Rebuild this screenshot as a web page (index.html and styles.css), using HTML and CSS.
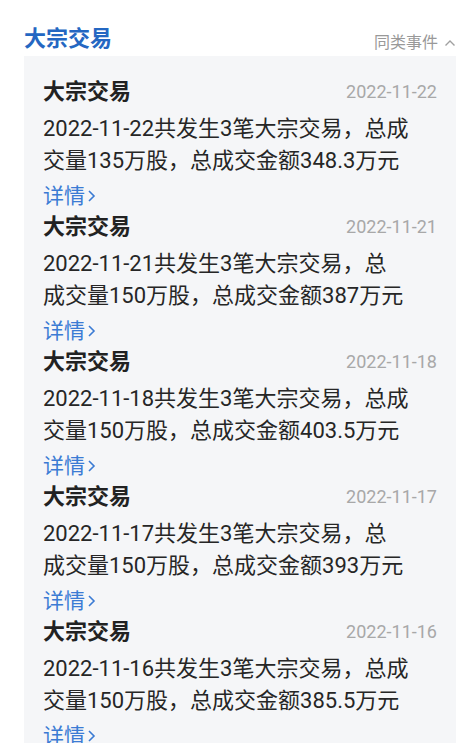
FILE: index.html
```html
<!DOCTYPE html>
<html lang="zh-CN">
<head>
<meta charset="UTF-8">
<meta name="viewport" content="width=device-width, initial-scale=1.0">
<title>大宗交易</title>
<link rel="stylesheet" href="styles.css">
</head>
<body>
<div class="wrapper">
    <div class="head">
        <div class="head-title">大宗交易</div>
        <div class="head-more">同类事件
            <svg class="caret" width="12" height="8" viewBox="0 0 12 8"><path d="M1.5 6.5 L6 2 L10.5 6.5" fill="none" stroke="#a0a0a0" stroke-width="1.4"/></svg>
        </div>
    </div>
    <div class="list">
        <div class="item">
            <div class="item-top"><span class="item-title">大宗交易</span><span class="item-date">2022-11-22</span></div>
            <div class="item-text">2022-11-22共发生3笔大宗交易，总成<br>交量135万股，总成交金额348.3万元</div>
            <div class="item-link">详情<svg class="arrow" width="10" height="16" viewBox="0 0 10 16"><path d="M2 3 L7 8 L2 13" fill="none" stroke="#3b7bd4" stroke-width="1.6"/></svg></div>
        </div>
        <div class="item">
            <div class="item-top"><span class="item-title">大宗交易</span><span class="item-date">2022-11-21</span></div>
            <div class="item-text">2022-11-21共发生3笔大宗交易，总<br>成交量150万股，总成交金额387万元</div>
            <div class="item-link">详情<svg class="arrow" width="10" height="16" viewBox="0 0 10 16"><path d="M2 3 L7 8 L2 13" fill="none" stroke="#3b7bd4" stroke-width="1.6"/></svg></div>
        </div>
        <div class="item">
            <div class="item-top"><span class="item-title">大宗交易</span><span class="item-date">2022-11-18</span></div>
            <div class="item-text">2022-11-18共发生3笔大宗交易，总成<br>交量150万股，总成交金额403.5万元</div>
            <div class="item-link">详情<svg class="arrow" width="10" height="16" viewBox="0 0 10 16"><path d="M2 3 L7 8 L2 13" fill="none" stroke="#3b7bd4" stroke-width="1.6"/></svg></div>
        </div>
        <div class="item">
            <div class="item-top"><span class="item-title">大宗交易</span><span class="item-date">2022-11-17</span></div>
            <div class="item-text">2022-11-17共发生3笔大宗交易，总<br>成交量150万股，总成交金额393万元</div>
            <div class="item-link">详情<svg class="arrow" width="10" height="16" viewBox="0 0 10 16"><path d="M2 3 L7 8 L2 13" fill="none" stroke="#3b7bd4" stroke-width="1.6"/></svg></div>
        </div>
        <div class="item">
            <div class="item-top"><span class="item-title">大宗交易</span><span class="item-date">2022-11-16</span></div>
            <div class="item-text">2022-11-16共发生3笔大宗交易，总成<br>交量150万股，总成交金额385.5万元</div>
            <div class="item-link">详情<svg class="arrow" width="10" height="16" viewBox="0 0 10 16"><path d="M2 3 L7 8 L2 13" fill="none" stroke="#3b7bd4" stroke-width="1.6"/></svg></div>
        </div>
    </div>
</div>
</body>
</html>
```

FILE: styles.css
```css
html, body{
    margin: 0;
    padding: 0;
    background: #fff;
}
body{
    font-family: Roboto, "Noto Sans CJK SC", sans-serif;
    color: #222;
}
.wrapper{
    width: 474px;
    height: 746px;
    overflow: hidden;
    padding: 20px 18px 0 24px;
    box-sizing: border-box;
}
.head{
    display: flex;
    justify-content: space-between;
    height: 36px;
}
.head-title{
    font-size: 22px;
    font-weight: 700;
    color: #2467c2;
    line-height: 36px;
    margin-top: 1px;
}
.head-more{
    display: flex;
    align-items: center;
    align-self: flex-end;
    font-size: 16px;
    color: #999;
    line-height: 22px;
    margin-bottom: 2px;
}
.caret{
    margin-left: 6px;
}
.list{
    background: #f5f6f8;
    padding: 21px 19px 0 19px;
    height: 687px;
    box-sizing: border-box;
    overflow: hidden;
}
.item-top{
    display: flex;
    justify-content: space-between;
    align-items: center;
    height: 30px;
}
.item-title{
    font-size: 22px;
    font-weight: 700;
    line-height: 30px;
    color: #222;
}
.item-date{
    font-size: 18px;
    line-height: 30px;
    color: #a8a8a8;
}
.item-text{
    margin-top: 6px;
    font-size: 22px;
    line-height: 32px;
    color: #262626;
    white-space: nowrap;
}
.item-link{
    display: flex;
    align-items: center;
    margin-top: 3px;
    height: 32px;
    line-height: 32px;
    font-size: 21px;
    color: #3b7bd4;
}
.arrow{
    margin-left: 2px;
}
```
